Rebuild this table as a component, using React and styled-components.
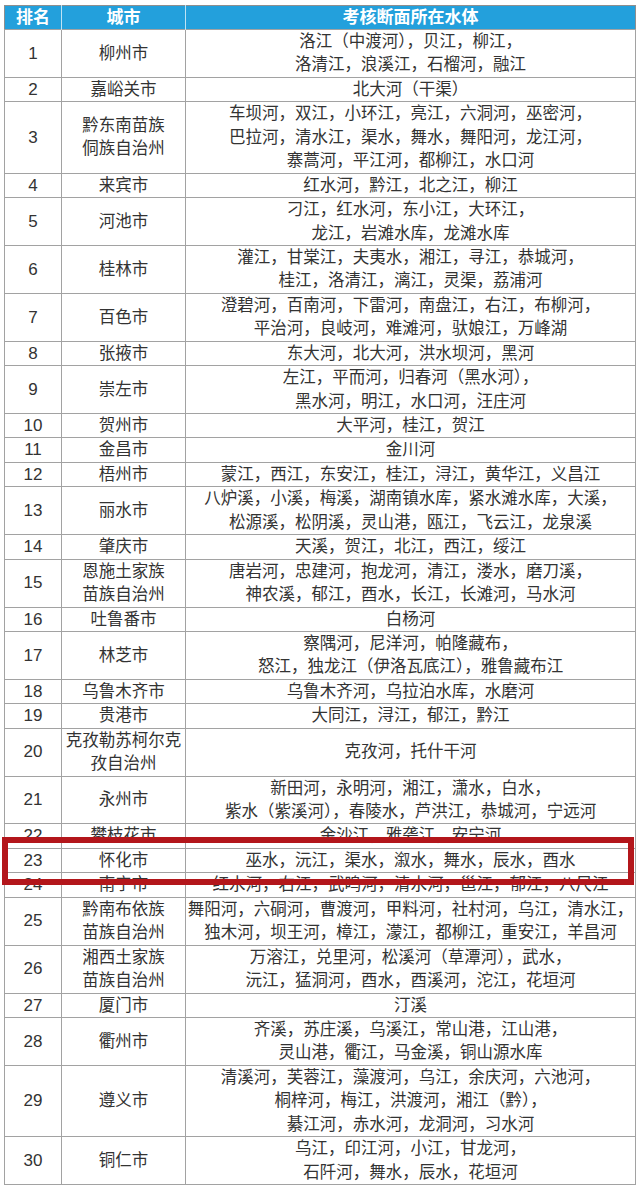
import React from "react";
import styled, { createGlobalStyle } from "styled-components";

const GlobalStyle = createGlobalStyle`
  html, body {
    margin: 0;
    padding: 0;
    background: #ffffff;
  }
  body {
    font-family: "Liberation Sans", "Noto Sans CJK SC", sans-serif;
    color: #333333;
  }
`;

const Page = styled.div`
  position: relative;
  width: 640px;
  padding: 5px 0 14px 4px;
  box-sizing: border-box;
`;

const Table = styled.table`
  width: 631px;
  border-collapse: collapse;
  table-layout: fixed;
  border: 1px solid #8e8e8e;
`;

const HeadCell = styled.th`
  background: #23a0dc;
  color: #ffffff;
  font-size: 17px;
  font-weight: bold;
  line-height: 23px;
  padding: 0;
  text-align: center;
  border-left: 1px solid #bfe3f4;
  &:first-child {
    border-left: none;
  }
`;

const Cell = styled.td`
  font-size: ${(p) => (p.$rank ? "17px" : "16.5px")};
  line-height: 23.44px;
  padding: 0;
  text-align: center;
  vertical-align: middle;
  white-space: nowrap;
  border: 1px solid #a2a2a2;
  color: #333333;
`;

const Line = styled.span`
  display: block;
`;

// red frame drawn over row 23
const Highlight = styled.div`
  position: absolute;
  left: 2px;
  top: 837px;
  width: 632px;
  height: 48px;
  box-sizing: border-box;
  border: 6px solid #b3161b;
  pointer-events: none;
`;

const rows = [
  ["柳州市", ["洛江（中渡河），贝江，柳江，", "洛清江，浪溪江，石榴河，融江"]],
  ["嘉峪关市", ["北大河（干渠）"]],
  ["黔东南苗族|侗族自治州", ["车坝河，双江，小环江，亮江，六洞河，巫密河，", "巴拉河，清水江，渠水，舞水，舞阳河，龙江河，", "寨蒿河，平江河，都柳江，水口河"]],
  ["来宾市", ["红水河，黔江，北之江，柳江"]],
  ["河池市", ["刁江，红水河，东小江，大环江，", "龙江，岩滩水库，龙滩水库"]],
  ["桂林市", ["灌江，甘棠江，夫夷水，湘江，寻江，恭城河，", "桂江，洛清江，漓江，灵渠，荔浦河"]],
  ["百色市", ["澄碧河，百南河，下雷河，南盘江，右江，布柳河，", "平治河，良岐河，难滩河，驮娘江，万峰湖"]],
  ["张掖市", ["东大河，北大河，洪水坝河，黑河"]],
  ["崇左市", ["左江，平而河，归春河（黑水河），", "黑水河，明江，水口河，汪庄河"]],
  ["贺州市", ["大平河，桂江，贺江"]],
  ["金昌市", ["金川河"]],
  ["梧州市", ["蒙江，西江，东安江，桂江，浔江，黄华江，义昌江"]],
  ["丽水市", ["八炉溪，小溪，梅溪，湖南镇水库，紧水滩水库，大溪，", "松源溪，松阴溪，灵山港，瓯江，飞云江，龙泉溪"]],
  ["肇庆市", ["天溪，贺江，北江，西江，绥江"]],
  ["恩施土家族|苗族自治州", ["唐岩河，忠建河，抱龙河，清江，溇水，磨刀溪，", "神农溪，郁江，酉水，长江，长滩河，马水河"]],
  ["吐鲁番市", ["白杨河"]],
  ["林芝市", ["察隅河，尼洋河，帕隆藏布，", "怒江，独龙江（伊洛瓦底江），雅鲁藏布江"]],
  ["乌鲁木齐市", ["乌鲁木齐河，乌拉泊水库，水磨河"]],
  ["贵港市", ["大同江，浔江，郁江，黔江"]],
  ["克孜勒苏柯尔克|孜自治州", ["克孜河，托什干河"]],
  ["永州市", ["新田河，永明河，湘江，潇水，白水，", "紫水（紫溪河），春陵水，芦洪江，恭城河，宁远河"]],
  ["攀枝花市", ["金沙江，雅砻江，安宁河"]],
  ["怀化市", ["巫水，沅江，渠水，溆水，舞水，辰水，酉水"]],
  ["南宁市", ["红水河，右江，武鸣河，清水河，邕江，郁江，八尺江"]],
  ["黔南布依族|苗族自治州", ["舞阳河，六硐河，曹渡河，甲料河，社村河，乌江，清水江，", "独木河，坝王河，樟江，濛江，都柳江，重安江，羊昌河"]],
  ["湘西土家族|苗族自治州", ["万溶江，兑里河，松溪河（草潭河），武水，", "沅江，猛洞河，酉水，酉溪河，沱江，花垣河"]],
  ["厦门市", ["汀溪"]],
  ["衢州市", ["齐溪，苏庄溪，乌溪江，常山港，江山港，", "灵山港，衢江，马金溪，铜山源水库"]],
  ["遵义市", ["清溪河，芙蓉江，藻渡河，乌江，余庆河，六池河，", "桐梓河，梅江，洪渡河，湘江（黔），", "綦江河，赤水河，龙洞河，习水河"]],
  ["铜仁市", ["乌江，印江河，小江，甘龙河，", "石阡河，舞水，辰水，花垣河"]],
];

const App = () => {
  return (
    <>
      <GlobalStyle />
      <Page>
        <Table>
          <colgroup>
            <col style={{ width: 57 }} />
            <col style={{ width: 124 }} />
            <col style={{ width: 450 }} />
          </colgroup>
          <thead>
            <tr>
              <HeadCell>排名</HeadCell>
              <HeadCell>城市</HeadCell>
              <HeadCell>考核断面所在水体</HeadCell>
            </tr>
          </thead>
          <tbody>
            {rows.map(([city, waters], i) => (
              <tr key={i}>
                <Cell $rank>{i + 1}</Cell>
                <Cell>
                  {city.split("|").map((part) => (
                    <Line key={part}>{part}</Line>
                  ))}
                </Cell>
                <Cell>
                  {waters.map((w) => (
                    <Line key={w}>{w}</Line>
                  ))}
                </Cell>
              </tr>
            ))}
          </tbody>
        </Table>
        <Highlight />
      </Page>
    </>
  );
};

export default App;
